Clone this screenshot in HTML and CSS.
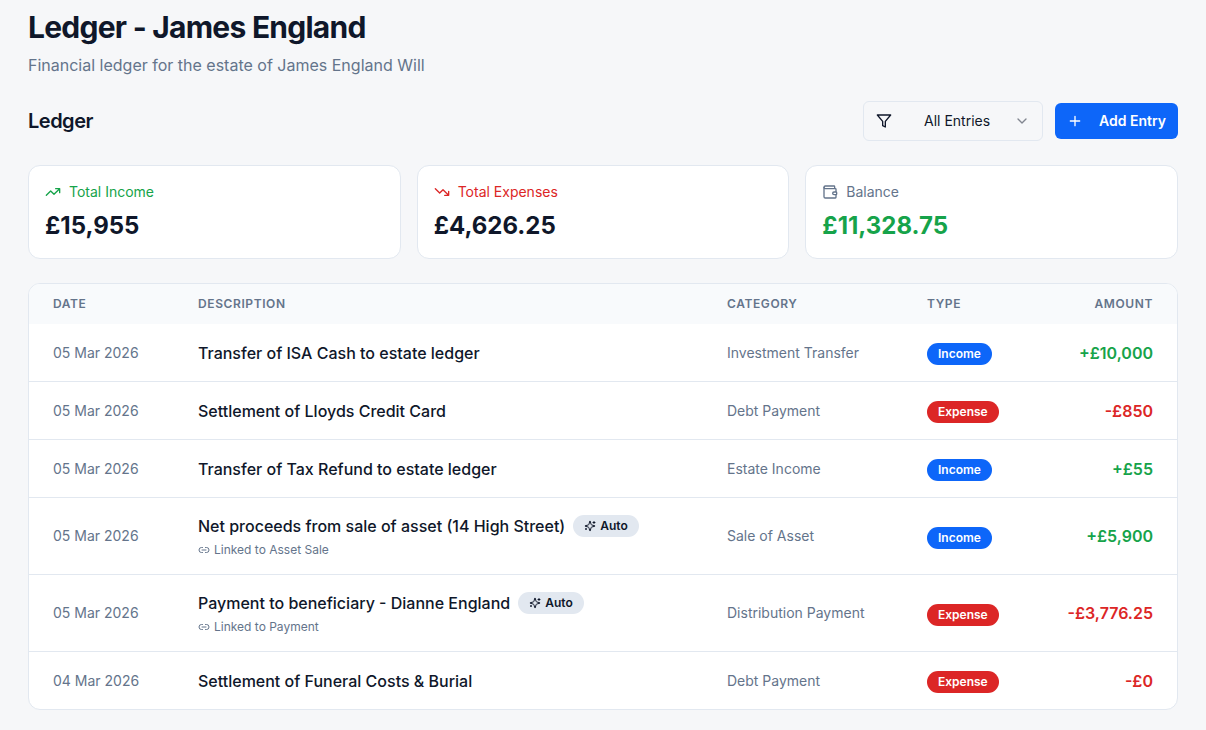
FILE: index.html
```html
<!DOCTYPE html>
<html lang="en">

<head>
    <meta charset="UTF-8">
    <meta name="viewport" content="width=device-width, initial-scale=1.0">
    <title>Ledger - James England</title>
    <link rel="stylesheet" href="styles.css">
</head>

<body>
    <!-- shared icons -->
    <svg class="sprite" aria-hidden="true">
        <symbol id="sparkles" viewBox="0 0 24 24">
            <path d="M9.937 15.5A2 2 0 0 0 8.5 14.063l-6.135-1.582a.5.5 0 0 1 0-.962L8.5 9.936A2 2 0 0 0 9.937 8.5l1.582-6.135a.5.5 0 0 1 .963 0L14.063 8.5A2 2 0 0 0 15.5 9.937l6.135 1.581a.5.5 0 0 1 0 .964L15.5 14.063a2 2 0 0 0-1.437 1.437l-1.582 6.135a.5.5 0 0 1-.963 0z" />
            <path d="M20 3v4M22 5h-4M4 17v2M5 18H3" />
        </symbol>
        <symbol id="link" viewBox="0 0 24 24">
            <path d="M9 17H7A5 5 0 0 1 7 7h2M15 7h2a5 5 0 1 1 0 10h-2M8 12h8" />
        </symbol>
    </svg>

    <main class="page">
        <header class="header">
            <h1>Ledger - James England</h1>
            <p>Financial ledger for the estate of James England Will</p>
        </header>

        <div class="toolbar">
            <h2>Ledger</h2>
            <div class="actions">
                <div class="filter">
                    <svg class="icon" viewBox="0 0 24 24" aria-hidden="true">
                        <path d="M22 3H2l8 9.460V19l4 2v-8.540L22 3z" />
                    </svg>
                    <select aria-label="Filter entries">
                        <option>All Entries</option>
                        <option>Income</option>
                        <option>Expense</option>
                    </select>
                    <svg class="icon chevron" viewBox="0 0 24 24" aria-hidden="true">
                        <path d="m6 9 6 6 6-6" />
                    </svg>
                </div>
                <button type="button" class="add">
                    <svg class="icon" viewBox="0 0 24 24" aria-hidden="true">
                        <path d="M5 12h14M12 5v14" />
                    </svg>
                    Add Entry
                </button>
            </div>
        </div>

        <section class="cards">
            <div class="card">
                <p class="label green">
                    <svg class="icon" viewBox="0 0 24 24" aria-hidden="true">
                        <path d="M22 7l-8.500 8.500-5-5L2 17M16 7h6v6" />
                    </svg>
                    Total Income
                </p>
                <p class="total">£15,955</p>
            </div>
            <div class="card">
                <p class="label red">
                    <svg class="icon" viewBox="0 0 24 24" aria-hidden="true">
                        <path d="M22 17l-8.500-8.500-5 5L2 7M16 17h6v-6" />
                    </svg>
                    Total Expenses
                </p>
                <p class="total">£4,626.25</p>
            </div>
            <div class="card">
                <p class="label muted">
                    <svg class="icon" viewBox="0 0 24 24" aria-hidden="true">
                        <path d="M19 7V4a1 1 0 0 0-1-1H5a2 2 0 0 0 0 4h15a1 1 0 0 1 1 1v4h-3a2 2 0 0 0 0 4h3a1 1 0 0 0 1-1v-2a1 1 0 0 0-1-1" />
                        <path d="M3 5v14a2 2 0 0 0 2 2h15a1 1 0 0 0 1-1v-4" />
                    </svg>
                    Balance
                </p>
                <p class="total green">£11,328.75</p>
            </div>
        </section>

        <div class="table-box">
            <table>
                <colgroup>
                    <col class="col-date">
                    <col>
                    <col class="col-cat">
                    <col class="col-type">
                    <col class="col-amount">
                </colgroup>
                <thead>
                    <tr>
                        <th>Date</th>
                        <th>Description</th>
                        <th>Category</th>
                        <th>Type</th>
                        <th class="amount">Amount</th>
                    </tr>
                </thead>
                <tbody>
                    <tr>
                        <td>05 Mar 2026</td>
                        <td class="desc">Transfer of ISA Cash to estate ledger</td>
                        <td>Investment Transfer</td>
                        <td class="type"><span class="badge income">Income</span></td>
                        <td class="amount green">+£10,000</td>
                    </tr>
                    <tr>
                        <td>05 Mar 2026</td>
                        <td class="desc">Settlement of Lloyds Credit Card</td>
                        <td>Debt Payment</td>
                        <td class="type"><span class="badge expense">Expense</span></td>
                        <td class="amount red">-£850</td>
                    </tr>
                    <tr>
                        <td>05 Mar 2026</td>
                        <td class="desc">Transfer of Tax Refund to estate ledger</td>
                        <td>Estate Income</td>
                        <td class="type"><span class="badge income">Income</span></td>
                        <td class="amount green">+£55</td>
                    </tr>
                    <tr>
                        <td>05 Mar 2026</td>
                        <td class="desc">
                            <div class="title">
                                Net proceeds from sale of asset (14 High Street)
                                <span class="badge auto"><svg class="icon" aria-hidden="true"><use href="#sparkles" /></svg>Auto</span>
                            </div>
                            <div class="linked"><svg class="icon" aria-hidden="true"><use href="#link" /></svg>Linked to Asset Sale</div>
                        </td>
                        <td>Sale of Asset</td>
                        <td class="type"><span class="badge income">Income</span></td>
                        <td class="amount green">+£5,900</td>
                    </tr>
                    <tr>
                        <td>05 Mar 2026</td>
                        <td class="desc">
                            <div class="title">
                                Payment to beneficiary - Dianne England
                                <span class="badge auto"><svg class="icon" aria-hidden="true"><use href="#sparkles" /></svg>Auto</span>
                            </div>
                            <div class="linked"><svg class="icon" aria-hidden="true"><use href="#link" /></svg>Linked to Payment</div>
                        </td>
                        <td>Distribution Payment</td>
                        <td class="type"><span class="badge expense">Expense</span></td>
                        <td class="amount red">-£3,776.25</td>
                    </tr>
                    <tr>
                        <td>04 Mar 2026</td>
                        <td class="desc">Settlement of Funeral Costs &amp; Burial</td>
                        <td>Debt Payment</td>
                        <td class="type"><span class="badge expense">Expense</span></td>
                        <td class="amount red">-£0</td>
                    </tr>
                </tbody>
            </table>
        </div>
    </main>
</body>

</html>
```

FILE: styles.css
```css
* {
    margin: 0;
    padding: 0;
    box-sizing: border-box;
}

body {
    background: #f6f7f9;
    color: #0f172a;
    font-family: Inter, "Liberation Sans", sans-serif;
    font-size: 16px;
    line-height: 24px;
}

.sprite {
    display: none;
}

.icon {
    width: 16px;
    height: 16px;
    flex-shrink: 0;
    fill: none;
    stroke: currentColor;
    stroke-width: 2;
    stroke-linecap: round;
    stroke-linejoin: round;
}

.green {
    color: #16a34a;
}

.red {
    color: #dc2626;
}

.muted {
    color: #64748b;
}

.page {
    padding: 9px 28px 20px;
}

.header h1 {
    font-size: 30px;
    line-height: 36px;
    font-weight: 700;
    letter-spacing: -0.025em;
    margin-bottom: 8px;
}

.header p {
    color: #64748b;
}

.toolbar {
    display: flex;
    align-items: center;
    justify-content: space-between;
    margin: 24px 0;
}

.toolbar h2 {
    font-size: 20px;
    line-height: 28px;
    font-weight: 600;
    letter-spacing: -0.025em;
}

.actions {
    display: flex;
    align-items: center;
    gap: 12px;
}

.filter {
    display: grid;
    grid-template-columns: 16px 1fr 16px;
    align-items: center;
    width: 180px;
    height: 40px;
    padding: 0 12px;
    border: 1px solid #e2e8f0;
    border-radius: 6px;
}

.filter .icon {
    grid-row: 1;
    grid-column: 1;
    pointer-events: none;
}

.filter .chevron {
    grid-column: 3;
    opacity: 0.5;
}

/* the select covers the whole box, icons sit in the side columns */
.filter select {
    grid-row: 1;
    grid-column: 1 / 4;
    height: 38px;
    padding: 0 32px 0 48px;
    appearance: none;
    border: 0;
    background: none;
    color: inherit;
    font: 14px/20px Inter, "Liberation Sans", sans-serif;
    cursor: pointer;
}

.add {
    display: flex;
    align-items: center;
    gap: 16px;
    height: 36px;
    padding: 0 12px;
    border: 0;
    border-radius: 6px;
    background: #0d66f9;
    color: #fff;
    font: 600 14px/20px Inter, "Liberation Sans", sans-serif;
    cursor: pointer;
}

.cards {
    display: grid;
    grid-template-columns: repeat(3, 1fr);
    gap: 16px;
    margin-bottom: 24px;
}

.card {
    padding: 16px;
    background: #fff;
    border: 1px solid #e2e8f0;
    border-radius: 12px;
}

.label {
    display: flex;
    align-items: center;
    gap: 8px;
    font-size: 14px;
    line-height: 20px;
    margin-bottom: 8px;
}

.total {
    font-size: 24px;
    line-height: 32px;
    font-weight: 700;
}

.table-box {
    background: #fff;
    border: 1px solid #e2e8f0;
    border-radius: 12px;
    overflow: hidden;
}

table {
    width: 100%;
    border-collapse: separate;
    border-spacing: 0;
    table-layout: fixed;
}

.col-date {
    width: 157px;
}

.col-cat {
    width: 200px;
}

.col-type {
    width: 120px;
}

.col-amount {
    width: 142px;
}

th {
    height: 40px;
    padding: 0 12px;
    background: #f8fafc;
    color: #64748b;
    font-size: 12px;
    line-height: 16px;
    font-weight: 600;
    letter-spacing: 0.05em;
    text-align: left;
    text-transform: uppercase;
}

td {
    height: 58px;
    padding: 16px 12px;
    border-bottom: 1px solid #e2e8f0;
    color: #64748b;
    font-size: 14px;
    line-height: 20px;
    vertical-align: middle;
}

tbody tr:last-child td {
    height: 57px;
    border-bottom: 0;
}

th:first-child,
td:first-child {
    padding-left: 24px;
}

th:last-child,
td:last-child {
    padding-right: 24px;
}

.desc {
    color: #0f172a;
    font-size: 16px;
    line-height: 24px;
    font-weight: 500;
}

.type {
    font-size: 16px;
    line-height: 24px;
}

.amount {
    text-align: right;
}

td.amount {
    font-size: 16px;
    line-height: 24px;
    font-weight: 600;
}

td.green {
    color: #16a34a;
}

td.red {
    color: #dc2626;
}

.title {
    display: flex;
    align-items: center;
    gap: 8px;
}

.linked {
    display: flex;
    align-items: center;
    gap: 4px;
    margin-top: 4px;
    color: #64748b;
    font-size: 12px;
    line-height: 16px;
    font-weight: 400;
}

.linked .icon,
.auto .icon {
    width: 12px;
    height: 12px;
}

.badge {
    display: inline-flex;
    align-items: center;
    gap: 4px;
    height: 22px;
    padding: 0 11px;
    border-radius: 11px;
    color: #fff;
    font-size: 12px;
    line-height: 16px;
    font-weight: 600;
}

.income {
    background: #0d66f9;
}

.expense {
    background: #dc2626;
}

.auto {
    background: #e2e8f0;
    color: #0f172a;
}
```
